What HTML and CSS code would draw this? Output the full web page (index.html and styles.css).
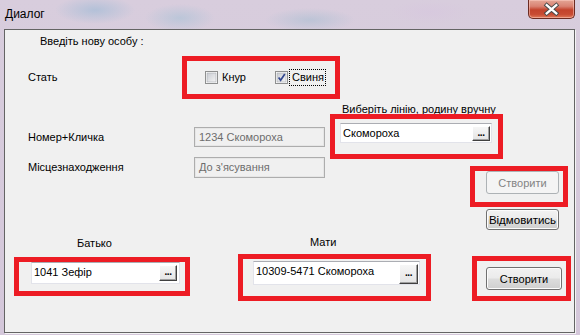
FILE: index.html
```html
<!DOCTYPE html>
<html lang="uk">
<head>
<meta charset="utf-8">
<title>Диалог</title>
<link rel="stylesheet" href="styles.css">
</head>
<body>
<div class="titlebar">
  <div class="title">Диалог</div>
  <div class="close">
    <svg width="47" height="19" viewBox="0 0 47 19">
      <path d="M18.5 5 L28.5 13.5 M28.5 5 L18.5 13.5" stroke="#4a4a4a" stroke-width="4.4" stroke-linecap="square" fill="none"/>
      <path d="M18.5 5 L28.5 13.5 M28.5 5 L18.5 13.5" stroke="#ffffff" stroke-width="2.4" stroke-linecap="square" fill="none"/>
    </svg>
  </div>
</div>
<div class="client">
  <div class="heading">Введіть нову особу :</div>

  <div class="row-stat">
    <div class="lbl lbl-stat">Стать</div>
    <div class="redbox box-stat">
      <label class="check check-first">
        <svg class="cb" width="13" height="13" viewBox="0 0 13 13">
          <defs><linearGradient id="g1" x1="0" y1="0" x2="1" y2="1"><stop offset="0" stop-color="#c9ccd2"/><stop offset="1" stop-color="#f4f4f4"/></linearGradient></defs>
          <rect x="0.5" y="0.5" width="12" height="12" fill="#fff" stroke="#8e8f8f"/>
          <rect x="2" y="2" width="9" height="9" fill="url(#g1)" stroke="#a8abb1" stroke-width="0.6"/>
        </svg>
        <span class="cbtext">Кнур</span>
      </label>
      <label class="check check-second">
        <svg class="cb" width="13" height="13" viewBox="0 0 13 13">
          <defs><linearGradient id="g2" x1="0" y1="0" x2="1" y2="1"><stop offset="0" stop-color="#c9ccd2"/><stop offset="1" stop-color="#f4f4f4"/></linearGradient></defs>
          <rect x="0.5" y="0.5" width="12" height="12" fill="#fff" stroke="#8e8f8f"/>
          <rect x="2" y="2" width="9" height="9" fill="url(#g2)" stroke="#a8abb1" stroke-width="0.6"/>
          <path d="M3.6 6.6 L5.6 9.2 L9.8 3" stroke="#32478f" stroke-width="1.7" fill="none"/>
        </svg>
        <span class="cbtext focus">Свиня</span>
      </label>
    </div>
  </div>

  <div class="upper">
    <div class="left-col">
      <div class="row-field row-num">
        <div class="lbl lbl-field">Номер+Кличка</div>
        <div class="field-dis">1234 Скомороха</div>
      </div>
      <div class="row-field row-loc">
        <div class="lbl lbl-field">Місцезнаходження</div>
        <div class="field-dis field-loc">До з'ясування</div>
      </div>
    </div>
    <div class="right-col">
      <div class="lbl lbl-line">Виберіть лінію, родину вручну</div>
      <div class="redbox box-line">
        <div class="input input-line">
          <span class="val">Скомороха</span>
          <span class="dots dots-line">...</span>
        </div>
      </div>
      <div class="redbox box-create1">
        <div class="btn btn-disabled">Створити</div>
      </div>
      <div class="btn btn-cancel">Відмовитись</div>
    </div>
  </div>

  <div class="lower">
    <div class="col col-father">
      <div class="lbl lbl-father">Батько</div>
      <div class="redbox box-father">
        <div class="input input-father">
          <span class="val">1041 Зефір</span>
          <span class="dots dots-father">...</span>
        </div>
      </div>
    </div>
    <div class="col col-mother">
      <div class="lbl lbl-mother">Мати</div>
      <div class="redbox box-mother">
        <div class="input input-mother">
          <span class="val">10309-5471 Скомороха</span>
          <span class="dots dots-mother">...</span>
        </div>
      </div>
    </div>
    <div class="col col-create">
      <div class="redbox box-create2">
        <div class="btn btn-create">Створити</div>
      </div>
    </div>
  </div>
</div>
</body>
</html>
```

FILE: styles.css
```css
* { box-sizing: border-box; }

html, body {
  margin: 0;
  padding: 0;
}

body {
  width: 580px;
  height: 335px;
  overflow: hidden;
  font-family: "Liberation Sans", Arial, sans-serif;
  font-size: 11px;
  color: #000;
  background:
    radial-gradient(ellipse 40px 14px at 95px 10px, rgba(170,190,215,0.8), rgba(170,190,215,0) 100%),
    radial-gradient(ellipse 35px 14px at 180px 18px, rgba(175,195,215,0.7), rgba(175,195,215,0) 100%),
    radial-gradient(ellipse 45px 12px at 310px 20px, rgba(170,190,210,0.6), rgba(170,190,210,0) 100%),
    radial-gradient(ellipse 40px 12px at 430px 12px, rgba(215,200,222,0.8), rgba(215,200,222,0) 100%),
    linear-gradient(to bottom, #d8cddd, #d4c7da);
}

.titlebar {
  height: 29px;
  display: flex;
  justify-content: space-between;
  align-items: flex-start;
}

.title {
  padding: 7px 0 0 5px;
  font-size: 12px;
  line-height: 15px;
  color: #000;
}

.close {
  width: 47px;
  height: 19px;
  margin-right: 5px;
  border: 1px solid #6b2b22;
  border-top: none;
  border-radius: 0 0 5px 5px;
  background: linear-gradient(to bottom, #e4a696 0%, #d98272 35%, #c3432c 55%, #c84c33 80%, #e07a5a 100%);
  box-shadow: inset 0 0 0 1px rgba(255,210,200,0.5);
  display: flex;
}

.client {
  width: 571px;
  height: 304px;
  margin-left: 4px;
  background: #f0f0f0;
  border: 1px solid #646464;
  box-shadow: 1px 1px 0 #f4f4f4;
}

.heading {
  margin: 5px 0 0 35px;
  line-height: 13px;
  height: 13px;
}

.lbl {
  line-height: 13px;
  white-space: nowrap;
}

.redbox {
  border: 5px solid #ed1c24;
}

/* Стать row */
.row-stat {
  display: flex;
  align-items: center;
  margin-top: 8px;
}
.lbl-stat {
  margin-left: 23px;
  width: 154px;
}
.box-stat {
  width: 158px;
  height: 43px;
  display: flex;
  align-items: center;
}
.check {
  display: flex;
  align-items: center;
}
.check-first { margin-left: 18px; }
.check-second { margin-left: 28px; }
.cb { display: block; }
.cbtext {
  margin-left: 3px;
  line-height: 13px;
  padding: 1px 1px;
}
.focus {
  outline: 1px dotted #000;
  padding: 1px 1px 1px 2px;
  margin-left: 2px;
}

/* upper split */
.upper {
  display: flex;
}
.left-col {
  width: 325px;
}
.row-field {
  display: flex;
  align-items: center;
}
.row-num { margin-top: 28px; }
.row-loc { margin-top: 10px; }
.lbl-field {
  margin-left: 23px;
  width: 166px;
}
.field-dis {
  width: 131px;
  height: 20px;
  border: 1px solid #adadad;
  box-shadow: inset 0 0 0 1px #e6e6e6;
  background: #f0f0f0;
  color: #6d6d6d;
  padding-left: 4px;
  line-height: 18px;
}
.field-loc { height: 21px; }

.right-col {
  display: flex;
  flex-direction: column;
  align-items: flex-start;
}
.lbl-line {
  margin: 4px 0 0 12px;
  height: 11px;
  line-height: 13px;
}
.box-line {
  width: 173px;
  height: 45px;
  margin-top: 0;
  padding: 4px 0 0 5px;
}

.input {
  background: #fff;
  border: 1px solid #e2e3ea;
  border-top-color: #abadb3;
  display: flex;
  justify-content: space-between;
}
.val {
  padding-left: 2px;
  white-space: nowrap;
}
.dots {
  background: linear-gradient(#f6f6f6, #e4e4e4);
  border: 1px solid;
  border-color: #fff #404040 #404040 #fff;
  box-shadow: inset -1px -1px 0 #a0a0a0;
  font-weight: bold;
  font-size: 10px;
  text-align: center;
  letter-spacing: -0.5px;
}

.input-line {
  width: 152px;
  height: 20px;
  align-items: center;
}
.input-line .val { line-height: 13px; }
.dots-line {
  width: 18px;
  height: 15px;
  margin-right: 1px;
  line-height: 11px;
}

.box-create1 {
  width: 98px;
  height: 41px;
  margin: 7px 0 0 140px;
  padding: 0 0 0 11px;
}

.btn {
  display: flex;
  align-items: center;
  justify-content: center;
  border-radius: 3px;
  white-space: nowrap;
}
.btn-disabled {
  width: 73px;
  height: 23px;
  border: 1px solid #adb2b5;
  background: #f4f4f4;
  color: #838383;
}
.btn-cancel {
  width: 73px;
  height: 21px;
  margin: 2px 0 0 156px;
  border: 1px solid #707070;
  background: linear-gradient(to bottom, #f2f2f2 0%, #ebebeb 48%, #dddddd 52%, #cfcfcf 100%);
  box-shadow: inset 0 0 0 1px #fcfcfc;
  font-size: 11.5px;
}
.btn-create {
  width: 76px;
  height: 23px;
  border: 1px solid #707070;
  background: linear-gradient(to bottom, #f2f2f2 0%, #ebebeb 48%, #dddddd 52%, #cfcfcf 100%);
  box-shadow: inset 0 0 0 1px #fcfcfc;
}

/* lower section */
.lower {
  display: flex;
  align-items: flex-start;
}
.col {
  display: flex;
  flex-direction: column;
  align-items: flex-start;
}

.col-father { margin-left: 9px; }
.lbl-father { margin: 7px 0 0 63px; }
.box-father {
  width: 176px;
  height: 39px;
  margin-top: 7px;
  padding: 0 0 0 12px;
}
.input-father {
  width: 149px;
  height: 22px;
}
.input-father .val { line-height: 19px; }
.dots-father {
  width: 18px;
  height: 16px;
  margin: 2px 2px 0 0;
  line-height: 12px;
}

.col-mother { margin-left: 48px; }
.lbl-mother { margin: 6px 0 0 72px; }
.box-mother {
  width: 193px;
  height: 47px;
  margin-top: 5px;
  padding: 2px 0 0 10px;
}
.input-mother {
  width: 167px;
  height: 24px;
}
.input-mother .val { line-height: 19px; padding-left: 2px; }
.dots-mother {
  width: 19px;
  height: 20px;
  margin: 2px 1px 0 0;
  line-height: 16px;
}

.col-create { margin-left: 41px; }
.box-create2 {
  width: 99px;
  height: 45px;
  margin-top: 26px;
  padding: 6px 0 0 9px;
}
```
